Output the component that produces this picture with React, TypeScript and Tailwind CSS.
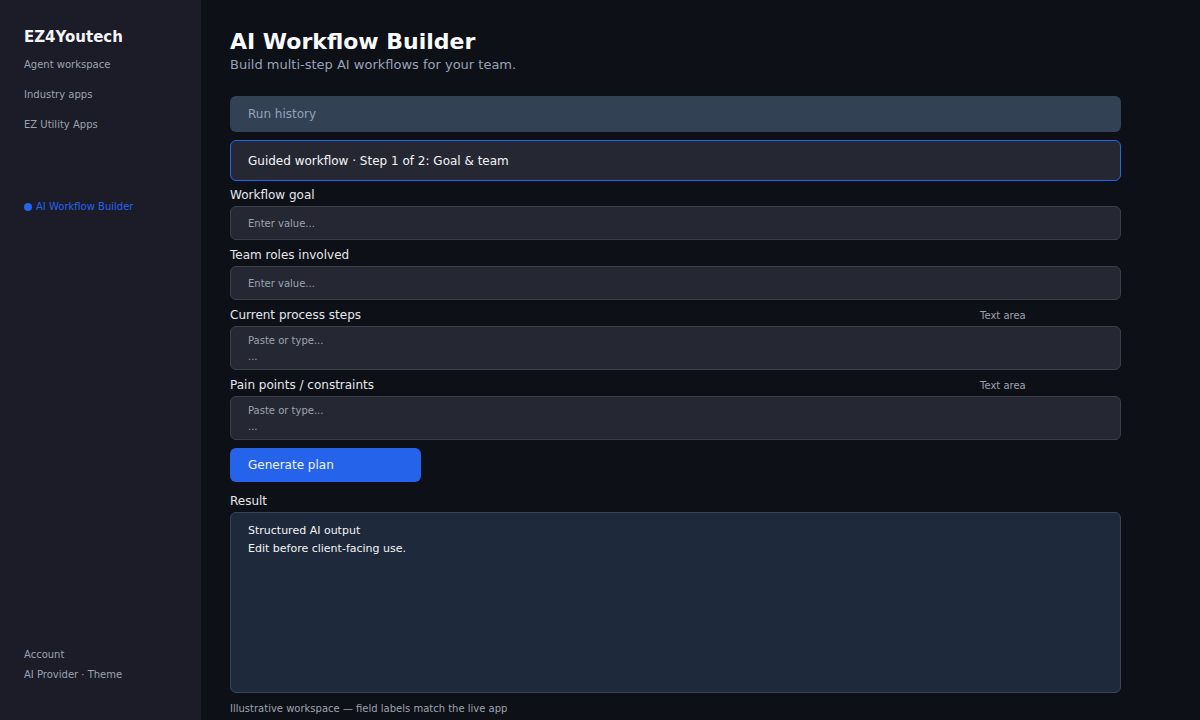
const navItems = ['Agent workspace', 'Industry apps', 'EZ Utility Apps'];

function Field({ label, placeholder }: { label: string; placeholder: string }) {
  return (
    <div className="flex flex-col gap-[3px]">
      <div className="h-4 text-[12px] leading-[17px] text-[#e5e7eb]">{label}</div>
      <div className="h-[34px] rounded-md border border-[#3a3f4c] bg-[#252833] px-[17px] flex items-center text-[10px] text-[#9ca3af]">
        {placeholder}
      </div>
    </div>
  );
}

function TextAreaField({ label }: { label: string }) {
  return (
    <div className="flex flex-col gap-[3px]">
      <div className="h-4 flex items-center">
        <span className="flex-1 text-[12px] leading-[17px] text-[#e5e7eb]">{label}</span>
        <span className="w-[141px] text-[10px] text-[#9ca3af]">Text area</span>
      </div>
      <div className="h-[44px] rounded-md border border-[#3a3f4c] bg-[#252833] px-[17px] pt-[6px] text-[10px] leading-4 text-[#9ca3af]">
        <div>Paste or type...</div>
        <div>...</div>
      </div>
    </div>
  );
}

export default function App() {
  return (
    <div
      className="flex h-[720px] w-full bg-[#0e1017] text-white"
      style={{ fontFamily: '"DejaVu Sans", "Noto Sans", sans-serif' }}
    >
      {/* sidebar */}
      <aside className="w-[201px] shrink-0 bg-[#1b1c28] px-6 pt-[27px] pb-[38px] flex flex-col">
        <div className="text-[15px] font-bold leading-5 text-[#f3f4f6]">EZ4Youtech</div>
        <nav className="mt-[11px] flex flex-col gap-[16px]">
          {navItems.map((item) => (
            <div key={item} className="text-[10px] leading-[14px] text-[#9ca3af]">
              {item}
            </div>
          ))}
        </nav>
        <div className="mt-[68px] flex items-center gap-[4px] text-[10px] leading-[14px] text-[#2563eb]">
          <span className="h-2 w-2 rounded-full bg-[#2563eb]" />
          AI Workflow Builder
        </div>
        <div className="mt-auto flex flex-col gap-[6px] text-[10px] leading-[14px] text-[#9ca3af]">
          <div>Account</div>
          <div>AI Provider · Theme</div>
        </div>
      </aside>

      {/* main */}
      <main className="flex-1 pl-[29px] pt-[29px]">
        <div className="w-[891px]">
          <h1 className="text-[22px] font-bold leading-[26px] text-[#f9fafb]">AI Workflow Builder</h1>
          <p className="mt-[2px] text-[13px] leading-4 text-[#94a3b8]">Build multi-step AI workflows for your team.</p>

          <div className="mt-[23px] h-[36px] rounded-md bg-[#334155] px-[18px] flex items-center text-[12px] text-[#94a3b8]">
            Run history
          </div>
          <div className="mt-2 h-[41px] rounded-md border border-[#2563eb] bg-[#252833] px-[17px] flex items-center text-[12px] text-[#f3f4f6]">
            Guided workflow · Step 1 of 2: Goal &amp; team
          </div>

          <div className="mt-[6px] flex flex-col gap-[7px]">
            <Field label="Workflow goal" placeholder="Enter value..." />
            <Field label="Team roles involved" placeholder="Enter value..." />
            <TextAreaField label="Current process steps" />
            <TextAreaField label="Pain points / constraints" />
          </div>

          <button className="mt-[8px] h-[34px] w-[191px] rounded-md bg-[#2563eb] px-[18px] text-left text-[12px] text-[#f3f4f6]">
            Generate plan
          </button>

          <div className="mt-[11px] h-4 text-[12px] leading-[17px] text-[#e5e7eb]">Result</div>
          <div className="mt-[3px] h-[181px] rounded-md border border-[#3a4456] bg-[#1e293b] px-[17px] pt-[9px] text-[11px] leading-[18px] text-[#f3f4f6]">
            <div>Structured AI output</div>
            <div>Edit before client-facing use.</div>
          </div>
          <div className="mt-[8px] text-[10px] leading-[15px] text-[#9ca3af]">
            Illustrative workspace — field labels match the live app
          </div>
        </div>
      </main>
    </div>
  );
}
